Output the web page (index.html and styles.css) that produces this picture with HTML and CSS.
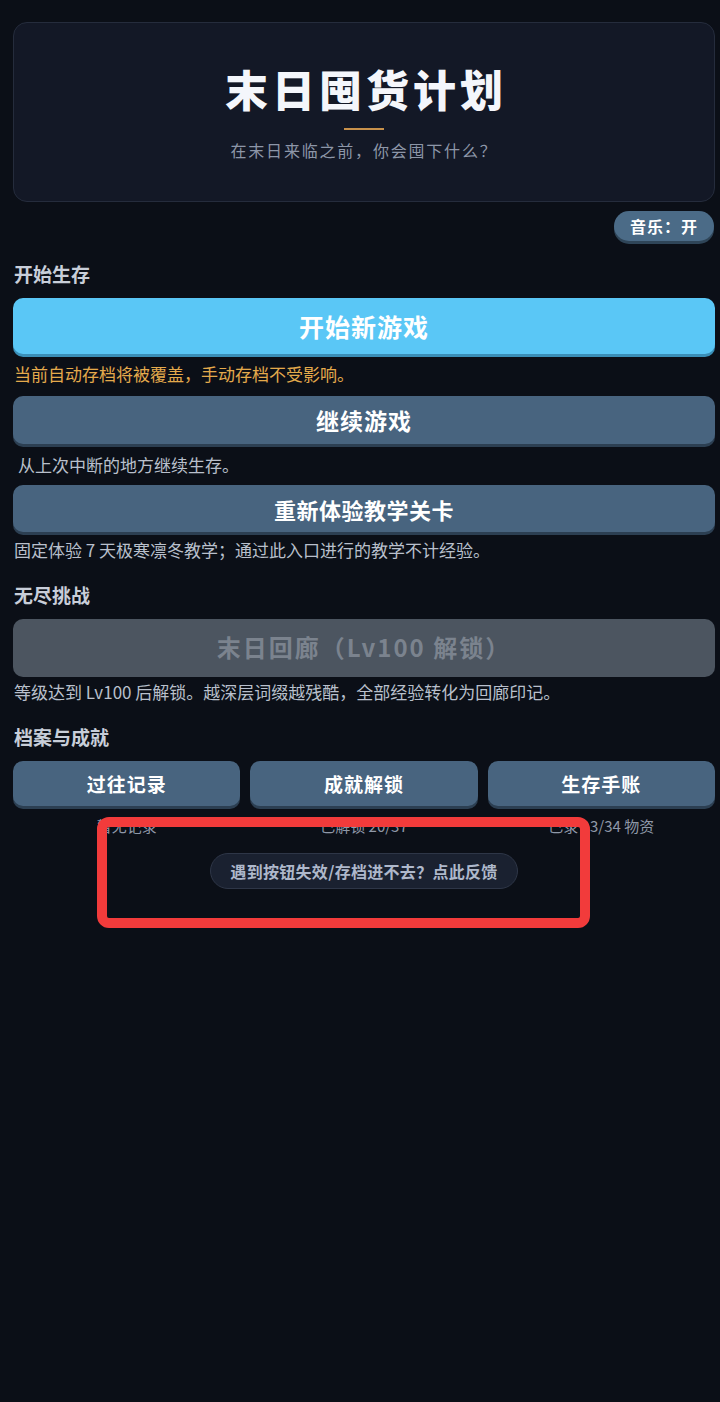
FILE: index.html
```html
<!DOCTYPE html>
<html lang="zh-CN">
<head>
<meta charset="utf-8">
<title>末日囤货计划</title>
<link rel="stylesheet" href="styles.css">
</head>
<body>
<div class="page">
  <header class="hero">
    <h1 class="hero-title">末日囤货计划</h1>
    <div class="hero-line"></div>
    <p class="hero-sub">在末日来临之前，你会囤下什么？</p>
  </header>

  <div class="music-row">
    <button class="music-btn">音乐：开</button>
  </div>

  <h2 class="section-label first">开始生存</h2>
  <button class="btn btn-primary btn-start">开始新游戏</button>
  <p class="note warn">当前自动存档将被覆盖，手动存档不受影响。</p>

  <button class="btn btn-secondary btn-continue">继续游戏</button>
  <p class="note indent">从上次中断的地方继续生存。</p>

  <button class="btn btn-secondary btn-tutorial">重新体验教学关卡</button>
  <p class="note">固定体验 7 天极寒凛冬教学；通过此入口进行的教学不计经验。</p>

  <h2 class="section-label">无尽挑战</h2>
  <button class="btn btn-disabled">末日回廊（Lv100 解锁）</button>
  <p class="note tight">等级达到 Lv100 后解锁。越深层词缀越残酷，全部经验转化为回廊印记。</p>

  <h2 class="section-label">档案与成就</h2>
  <div class="archive-grid">
    <div class="archive-item">
      <button class="btn btn-secondary btn-small">过往记录</button>
      <span class="archive-sub">暂无记录</span>
    </div>
    <div class="archive-item">
      <button class="btn btn-secondary btn-small">成就解锁</button>
      <span class="archive-sub">已解锁 20/37</span>
    </div>
    <div class="archive-item">
      <button class="btn btn-secondary btn-small">生存手账</button>
      <span class="archive-sub">已录 13/34 物资</span>
    </div>
  </div>

  <div class="feedback-row">
    <button class="feedback-btn">遇到按钮失效/存档进不去？点此反馈</button>
  </div>

  <div class="annotation"></div>
</div>
</body>
</html>
```

FILE: styles.css
```css
* { box-sizing: border-box; }

html, body {
  margin: 0;
  padding: 0;
  background: #0b0f17;
  min-height: 100%;
}

body {
  font-family: "Noto Sans CJK SC", "Noto Sans", sans-serif;
  color: #e6ebf3;
  height: 1402px;
}

.page {
  position: relative;
  padding: 22px 5px 0 13px;
  display: flex;
  flex-direction: column;
}

.hero {
  height: 180px;
  background: #131826;
  border: 1px solid #252c3c;
  border-radius: 14px;
  display: flex;
  flex-direction: column;
  align-items: center;
  padding-top: 38px;
}

.hero-title {
  margin: 0;
  font-size: 43px;
  line-height: 54px;
  font-weight: 900;
  letter-spacing: 4px;
  color: #f4f6fb;
  padding-left: 4px;
}

.hero-line {
  width: 40px;
  height: 2px;
  background: #c8914b;
  margin-top: 13px;
}

.hero-sub {
  margin: 9px 0 0;
  font-size: 16px;
  line-height: 22px;
  letter-spacing: 1.8px;
  color: #8d96a8;
}

.music-row {
  display: flex;
  justify-content: flex-end;
  margin-top: 9px;
  padding-right: 1px;
}

.music-btn {
  height: 30px;
  padding: 0 16px;
  border: none;
  border-radius: 15px;
  background: #4b6b87;
  box-shadow: 0 3px 0 #2f4558;
  color: #ffffff;
  font-family: inherit;
  font-size: 16px;
  font-weight: 700;
  letter-spacing: 1px;
}

.section-label {
  margin: 23px 0 0;
  padding-left: 1px;
  font-size: 19px;
  line-height: 24px;
  font-weight: 700;
  color: #c8ced9;
}

.section-label.first { margin-top: 21px; }

.btn {
  width: 100%;
  border: none;
  border-radius: 10px;
  font-family: inherit;
  font-weight: 700;
  color: #ffffff;
  letter-spacing: 1px;
}

.btn-primary {
  background: #5ac7f6;
  box-shadow: 0 3px 0 #3a8fb8;
}

.btn-secondary {
  background: #48647f;
  box-shadow: 0 3px 0 #2c3f52;
}

.btn-start {
  height: 56px;
  margin-top: 12px;
  font-size: 25px;
}

.btn-continue {
  height: 48px;
  margin-top: 12px;
  font-size: 23px;
}

.btn-tutorial {
  height: 47px;
  margin-top: 10px;
  font-size: 22px;
  letter-spacing: 0.5px;
}

.btn-disabled {
  height: 58px;
  margin-top: 12px;
  padding-bottom: 4px;
  background: #4c5560;
  color: #7b838e;
  font-size: 24px;
  letter-spacing: 2px;
}

.note {
  margin: 8px 0 0;
  font-size: 17px;
  line-height: 20px;
  color: #b9c0cc;
  padding-left: 1px;
}

.note.warn { color: #e4aa4c; margin-top: 10px; }
.note.indent { padding-left: 5px; margin-top: 11px; }
.note.tight { margin-top: 5px; }

.archive-grid {
  display: grid;
  grid-template-columns: repeat(3, 1fr);
  column-gap: 10px;
  margin-top: 12px;
}

.archive-item {
  display: flex;
  flex-direction: column;
  align-items: center;
}

.btn-small {
  height: 45px;
  font-size: 19px;
  letter-spacing: 1px;
}

.archive-sub {
  margin-top: 11px;
  font-size: 15px;
  line-height: 18px;
  color: #8f98a8;
}

.feedback-row {
  display: flex;
  justify-content: center;
  margin-top: 18px;
}

.feedback-btn {
  height: 36px;
  padding: 0 19px;
  border-radius: 18px;
  border: 1px solid #2e3647;
  background: #1a2130;
  color: #aeb8cb;
  font-family: inherit;
  font-size: 16px;
  letter-spacing: 0.3px;
  font-weight: 700;
}

.annotation {
  position: absolute;
  left: 97px;
  top: 817px;
  width: 493px;
  height: 111px;
  border: 10px solid #f23b3b;
  border-radius: 12px;
  pointer-events: none;
}
```
